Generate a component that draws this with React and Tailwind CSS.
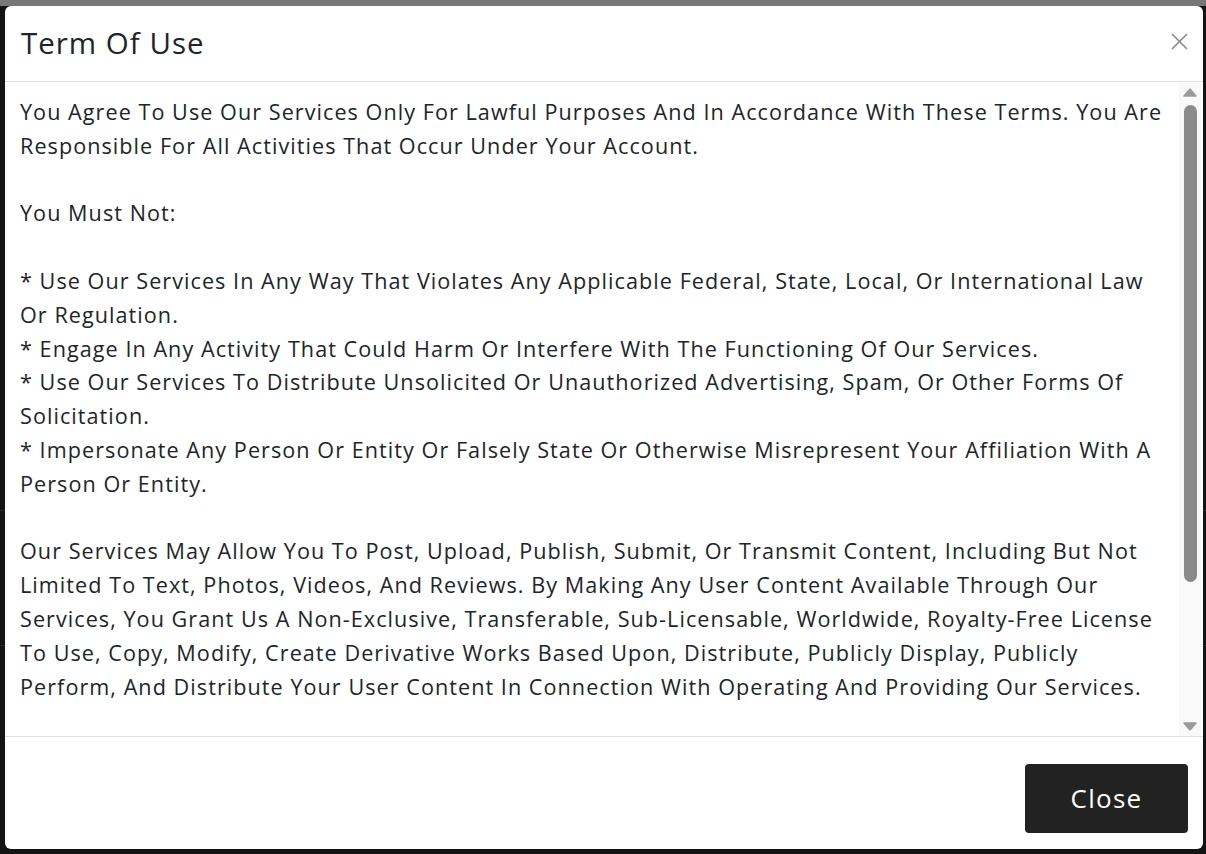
import React from "react";

const font = { fontFamily: '"Open Sans", "Liberation Sans", sans-serif' };

const paragraphs = [
  [
    "You Agree To Use Our Services Only For Lawful Purposes And In Accordance With These Terms. You Are",
    "Responsible For All Activities That Occur Under Your Account.",
  ],
  null,
  ["You Must Not:"],
  null,
  [
    "* Use Our Services In Any Way That Violates Any Applicable Federal, State, Local, Or International Law",
    "Or Regulation.",
    "* Engage In Any Activity That Could Harm Or Interfere With The Functioning Of Our Services.",
    "* Use Our Services To Distribute Unsolicited Or Unauthorized Advertising, Spam, Or Other Forms Of",
    "Solicitation.",
    "* Impersonate Any Person Or Entity Or Falsely State Or Otherwise Misrepresent Your Affiliation With A",
    "Person Or Entity.",
  ],
  null,
  [
    "Our Services May Allow You To Post, Upload, Publish, Submit, Or Transmit Content, Including But Not",
    "Limited To Text, Photos, Videos, And Reviews. By Making Any User Content Available Through Our",
    "Services, You Grant Us A Non-Exclusive, Transferable, Sub-Licensable, Worldwide, Royalty-Free License",
    "To Use, Copy, Modify, Create Derivative Works Based Upon, Distribute, Publicly Display, Publicly",
    "Perform, And Distribute Your User Content In Connection With Operating And Providing Our Services.",
  ],
];

export default function App() {
  return (
    <div className="relative w-[1206px] h-[854px] overflow-hidden bg-[#131313]" style={font}>
      {/* backdrop page remnants */}
      <div className="flex flex-col h-full">
        <div className="h-[6px] bg-[#777777]" />
        <div className="h-[504px]" />
        <div className="h-px bg-[#2c2c2c]" />
        <div className="h-[134px]" />
        <div className="h-px bg-[#2c2c2c]" />
      </div>

      {/* modal */}
      <div className="absolute left-[5px] top-[6px] w-[1198px] h-[843px] bg-white rounded-[6px] flex flex-col overflow-hidden">
        <div className="h-[76px] shrink-0 border-b border-[#dee2e6] flex items-center justify-between pl-[16px] pr-[15px]">
          <h1 className="text-[29.5px] font-medium text-[#212529] leading-none tracking-[1px] pb-[1px]">
            Term Of Use
          </h1>
          <svg width="17" height="17" viewBox="0 0 17 17" className="mb-[4px]">
            <path d="M1 1L16 16M16 1L1 16" stroke="#8a8a8a" strokeWidth="1.6" />
          </svg>
        </div>

        <div className="h-[655px] shrink-0 border-b border-[#dee2e6] flex">
          <div className="flex-1 pl-[15px] pt-[13px] text-[21.6px] leading-[33.8px] tracking-[1.05px] text-[#212529] whitespace-nowrap overflow-hidden">
            {paragraphs.map((p, i) =>
              p === null ? (
                <div key={i} className="h-[33.8px]" />
              ) : (
                <div key={i}>
                  {p.map((line, j) => (
                    <div key={j}>{line}</div>
                  ))}
                </div>
              )
            )}
          </div>
          <div className="w-[22px] mr-[2px] bg-[#f9f9f9] flex flex-col items-center pt-[6px] pb-[5px]">
            <svg width="14" height="9" viewBox="0 0 14 9">
              <path d="M7 1L13 8H1Z" fill="#9a9a9a" stroke="#9a9a9a" strokeLinejoin="round" strokeWidth="1.5" />
            </svg>
            <div className="mt-[8px] w-[13px] h-[477px] rounded-full bg-[#8a8a8a]" />
            <div className="flex-1" />
            <svg width="14" height="9" viewBox="0 0 14 9">
              <path d="M1 1H13L7 8Z" fill="#9a9a9a" stroke="#9a9a9a" strokeLinejoin="round" strokeWidth="1.5" />
            </svg>
          </div>
        </div>

        <div className="flex-1 flex justify-end items-start pt-[27px] pr-[15px]">
          <button className="w-[163px] h-[69px] bg-[#222222] text-white rounded-[4px] text-[26px] tracking-[1.3px] font-normal">
            Close
          </button>
        </div>
      </div>
    </div>
  );
}
